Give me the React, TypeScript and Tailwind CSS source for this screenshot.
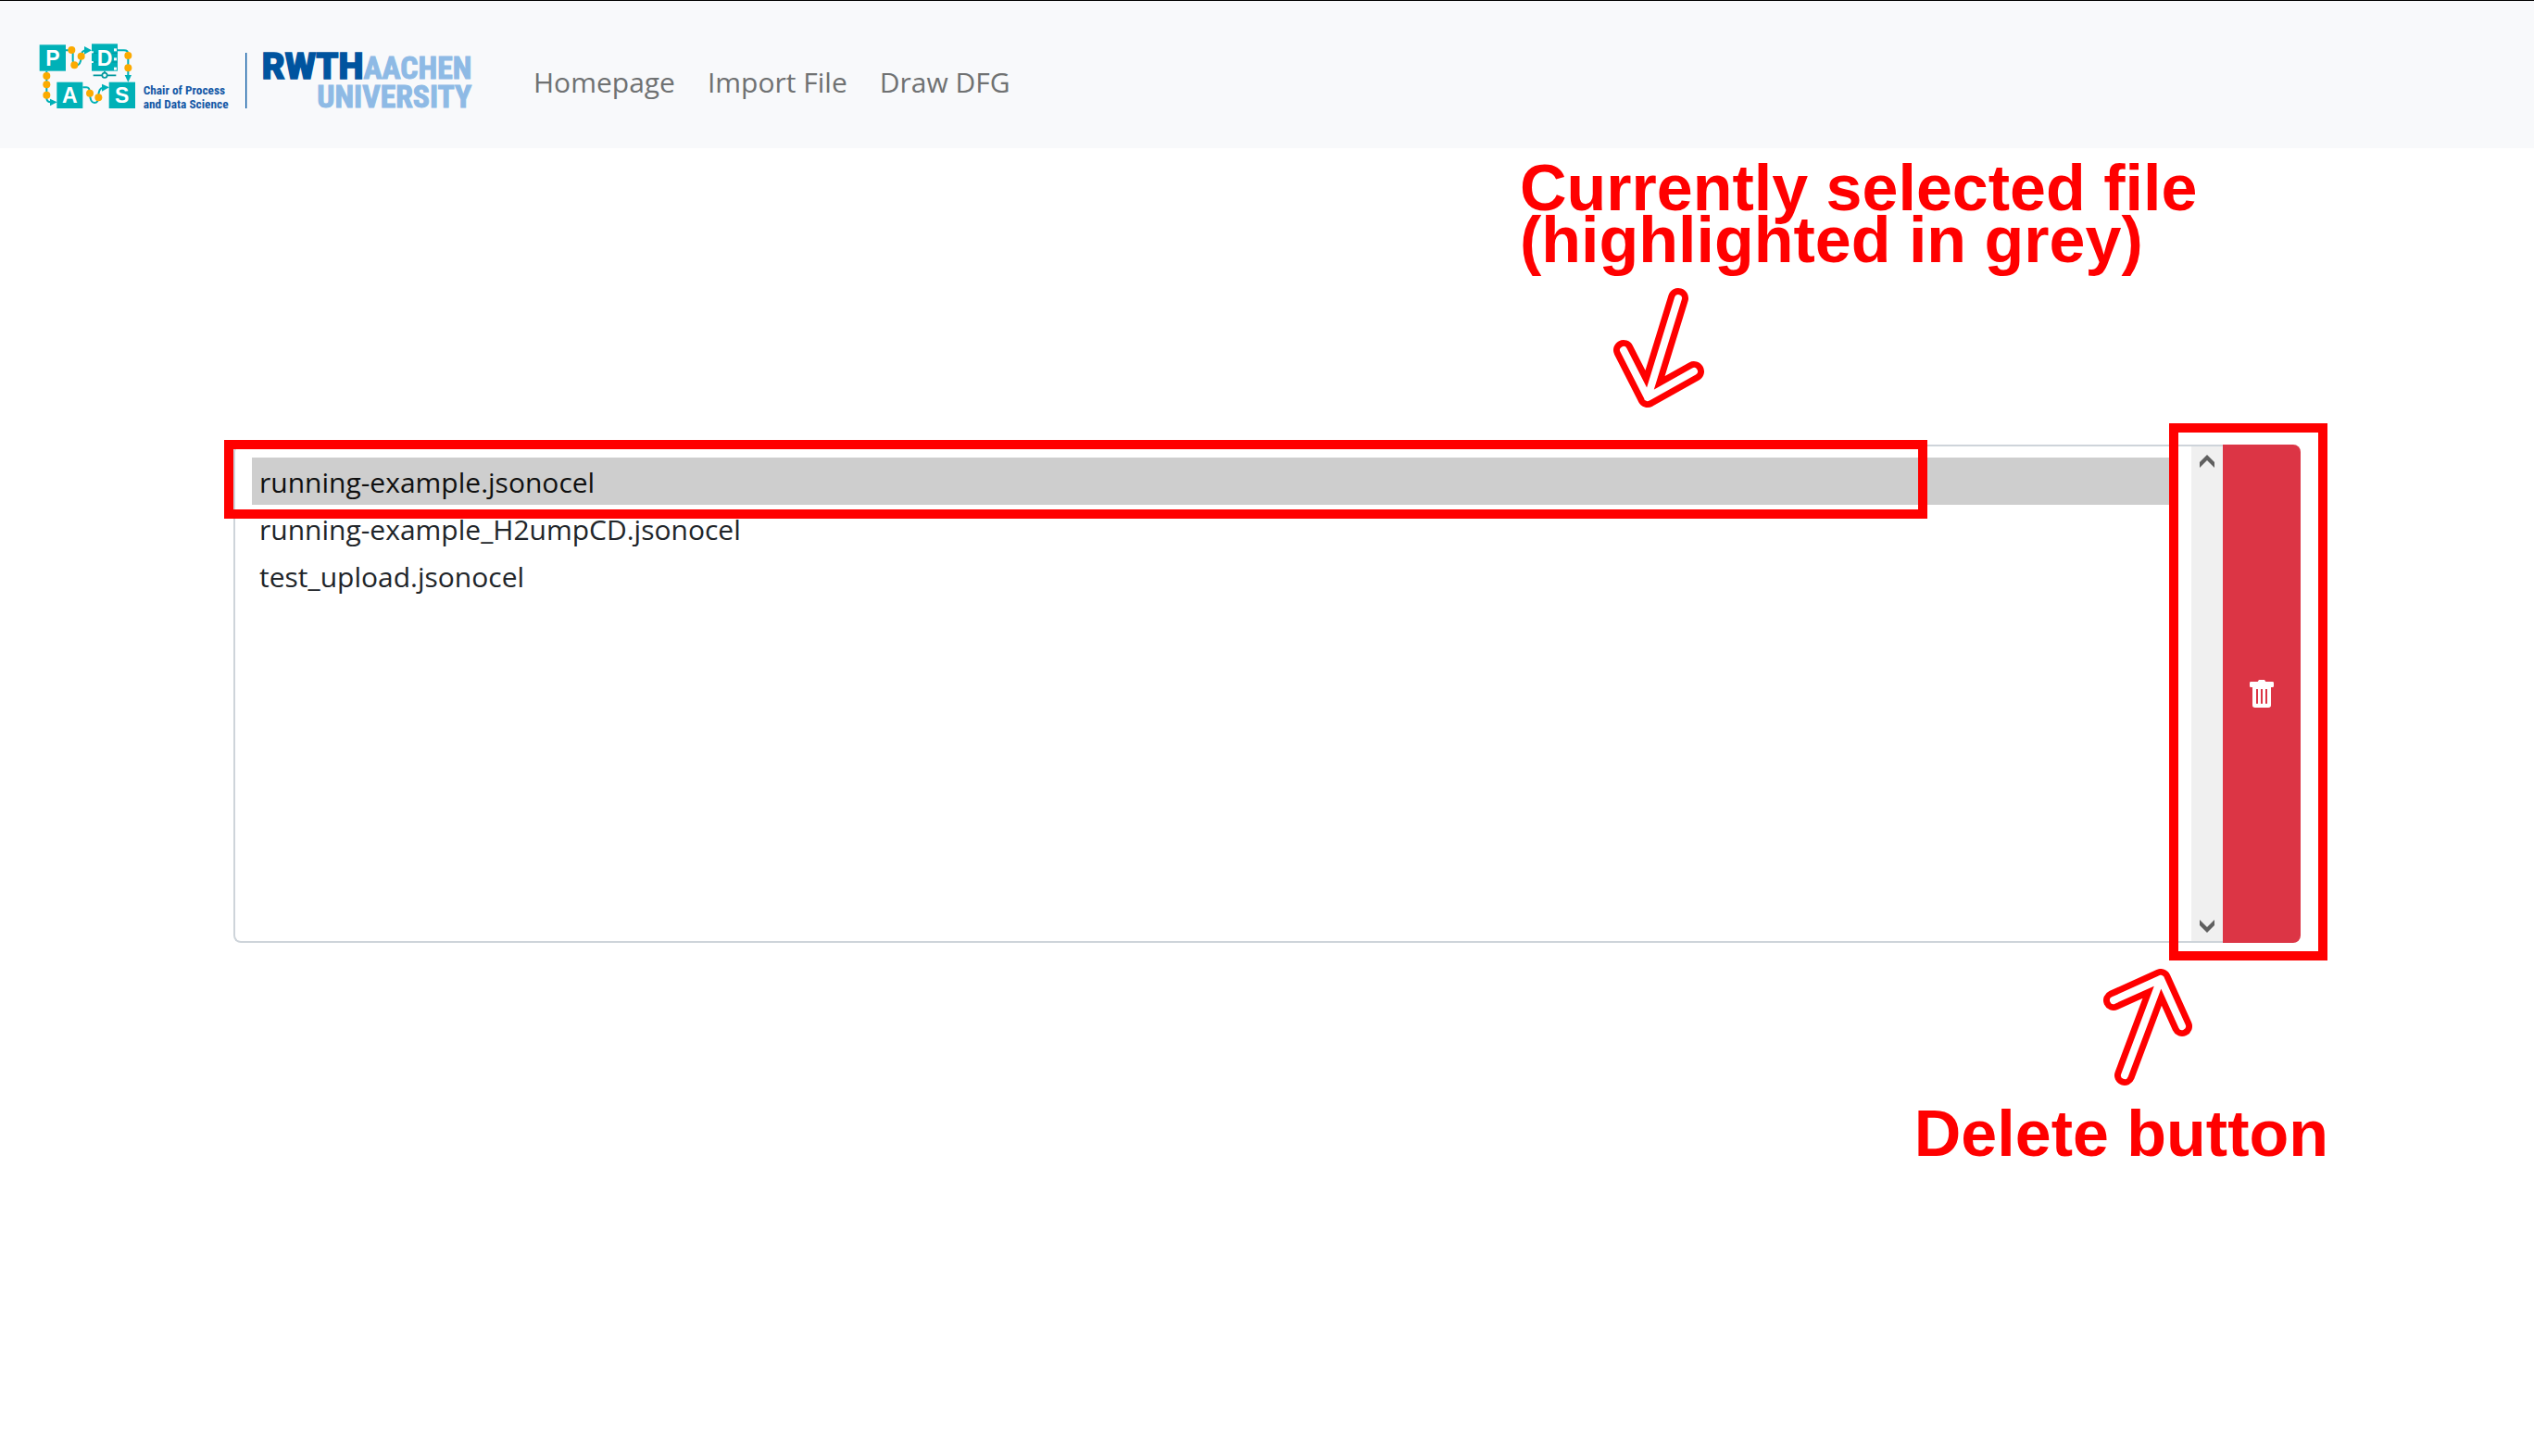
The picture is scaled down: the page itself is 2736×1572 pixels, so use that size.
import { useState } from "react";

const files = [
  "running-example.jsonocel",
  "running-example_H2umpCD.jsonocel",
  "test_upload.jsonocel",
];

const links = ["Homepage", "Import File", "Draw DFG"];

function Logo() {
  return (
    <svg
      viewBox="30 30 1410 255"
      className="h-[85px] w-[470px] shrink-0"
      role="img"
      aria-label="Chair of Process and Data Science, RWTH Aachen University"
    >
      <g fill="none" stroke="#00b1b7" strokeWidth="6">
        <path d="M123 73H142Q146 73 146 85V105Q146 122 156 122Q172 122 173 92Q174 73 190 73" />
        <path d="M291 73H312Q325 73 325 86V160" />
        <path d="M61 140V228Q61 241 76 241" />
        <path d="M178 193H190Q201 193 201 212Q202 243 216 243Q229 243 229 222Q229 195 244 194" />
      </g>
      <g fill="#00b1b7">
        <path d="M183 60L207 73L183 86Z" />
        <path d="M314 153H336L325 176Z" />
        <path d="M72 230L95 241L72 253Z" />
        <path d="M240 182L264 193L240 206Z" />
        <rect x="38" y="55" width="85" height="85" />
        <rect x="207" y="52" width="84" height="88" />
        <rect x="94" y="176" width="84" height="85" />
        <rect x="263" y="176" width="85" height="85" />
      </g>
      <g fill="#f8f9fb">
        <rect x="279" y="67" width="9" height="9" />
        <rect x="279" y="97" width="9" height="9" />
        <rect x="279" y="128" width="9" height="9" />
        <rect x="205" y="76" width="8" height="6" />
        <rect x="205" y="108" width="8" height="6" />
      </g>
      <path d="M212 82H226M272 82H291M212 111H226M272 111H291" stroke="#00979d" strokeWidth="3" />
      <path d="M249 140V148M212 154H241M257 154H286" stroke="#00979d" strokeWidth="5" />
      <circle cx="249" cy="154" r="8" fill="#f8f9fb" stroke="#00979d" strokeWidth="5" />
      <g fill="#fbaa00">
        <circle cx="142" cy="72" r="12" />
        <circle cx="151" cy="121" r="12" />
        <circle cx="173" cy="92" r="12" />
        <circle cx="325" cy="90" r="12" />
        <circle cx="325" cy="130" r="12" />
        <circle cx="61" cy="156" r="12" />
        <circle cx="61" cy="184" r="12" />
        <circle cx="61" cy="218" r="12" />
        <circle cx="201" cy="212" r="12" />
        <circle cx="229" cy="226" r="12" />
      </g>
      <g fill="#ffffff" fontFamily="Liberation Sans" fontWeight="700" fontSize="69" textAnchor="middle">
        <text x="81" y="122">P</text>
        <text x="249" y="122">D</text>
        <text x="136" y="244">A</text>
        <text x="305" y="244">S</text>
      </g>
      <g fill="#1458a6" fontFamily="Roboto Condensed, Roboto, sans-serif" fontWeight="700" fontSize="40">
        <text x="374" y="215">Chair of Process</text>
        <text x="374" y="260">and Data Science</text>
      </g>
      <rect x="705" y="81" width="4" height="180" fill="#00549f" />
      <text x="758" y="165" fill="#00549f" stroke="#00549f" strokeWidth="4" fontFamily="Roboto" fontWeight="900" fontSize="115">
        RWTH
      </text>
      <g
        fill="#8ebae5"
        stroke="#8ebae5"
        strokeWidth="3"
        fontFamily="Roboto Condensed, Roboto, sans-serif"
        fontWeight="700"
        fontSize="101"
        textAnchor="end"
      >
        <text x="1438" y="165">AACHEN</text>
        <text x="1438" y="259">UNIVERSITY</text>
      </g>
    </svg>
  );
}

function TrashIcon() {
  return (
    <svg viewBox="0 0 78 90" className="h-[30px] w-[26px]" aria-hidden="true">
      <path
        fill="#ffffff"
        fillRule="evenodd"
        d="M30 0H48L52 6H74Q78 6 78 10V20Q78 24 74 24H69V82Q69 90 61 90H17Q9 90 9 82V24H4Q0 24 0 20V10Q0 6 4 6H26ZM21 30V77H27V30ZM36 30V77H42V30ZM51 30V77H57V30Z"
      />
    </svg>
  );
}

function Arrow({ d, viewBox, className }: { d: string; viewBox: string; className: string }) {
  return (
    <svg viewBox={viewBox} className={className} fill="none" strokeLinecap="round" strokeLinejoin="round" aria-hidden="true">
      <path d={d} stroke="#ff0000" strokeWidth="22" />
      <path d={d} stroke="#ffffff" strokeWidth="8" />
    </svg>
  );
}

function ScrollButton({ up }: { up: boolean }) {
  return (
    <button type="button" aria-label={up ? "Scroll up" : "Scroll down"} className="flex h-8 items-center justify-center">
      <svg viewBox="0 0 16 14" className="h-[14px] w-4" fill="#606060" aria-hidden="true">
        <path d={up ? "M8 0L16 8V14L8 6L0 14V8Z" : "M8 14L16 6V0L8 8L0 0V6Z"} />
      </svg>
    </button>
  );
}

export default function App() {
  const [selected, setSelected] = useState(files[0]);

  return (
    <div className="min-h-screen overflow-hidden bg-white font-['Open_Sans',sans-serif] text-[#212529]">
      <header className="flex h-40 items-center border-t border-black bg-[#f8f9fb] px-10 pt-1">
        <a href="#home" className="shrink-0">
          <Logo />
        </a>
        <nav className="ml-[66px] flex items-center gap-[35px] pt-3 text-[30px] leading-[48px] text-[#6f7172]">
          {links.map((label) => (
            <a key={label} href="#" className="whitespace-nowrap">
              {label}
            </a>
          ))}
        </nav>
      </header>

      <main className="mx-auto max-w-[2280px] px-6 pt-80">
        <div className="relative flex h-[538px]">
          <div className="flex flex-1 rounded-l-lg border-2 border-r-0 border-[#ced4da]">
            <select
              size={4}
              aria-label="Uploaded files"
              value={selected}
              onChange={(e) => setSelected(e.target.value)}
              className="h-full min-w-0 flex-1 appearance-none overflow-hidden bg-transparent px-[18px] py-3 text-[30px] outline-none"
            >
              {files.map((file) => (
                <option key={file} value={file} className="h-[51px] px-2 pt-[6px] pb-0">
                  {file}
                </option>
              ))}
            </select>
            <div className="flex w-[34px] flex-col justify-between bg-[#f0f0f0]">
              <ScrollButton up />
              <ScrollButton up={false} />
            </div>
          </div>
          <button
            type="button"
            aria-label="Delete file"
            className="flex w-[84px] items-center justify-center rounded-r-lg bg-[#dc3545]"
          >
            <TrashIcon />
          </button>

          <div className="pointer-events-none absolute -top-[5px] right-[403px] -left-[10px] h-[85px] border-10 border-[#ff0000]" />
          <div className="pointer-events-none absolute -top-[23px] -right-[29px] -bottom-[19px] w-[171px] border-10 border-[#ff0000]" />

          <p className="absolute right-[113px] bottom-[731px] w-[730px] font-['Liberation_Sans',sans-serif] text-[70px] leading-14 font-bold whitespace-nowrap text-[#ff0000]">
            Currently selected file
            <br />
            (highlighted in grey)
          </p>
          <Arrow
            viewBox="1740 309 102 133"
            d="M1753 378L1779 429L1829 401M1779 429L1812 322"
            className="absolute right-[642px] bottom-[576px] h-[133px] w-[102px]"
          />
          <Arrow
            viewBox="2268 1044 102 131"
            d="M2282 1080L2333 1057L2356 1108M2333 1057L2294 1161"
            className="absolute top-[564px] right-[114px] h-[131px] w-[102px]"
          />
          <p className="absolute top-[704px] -right-[30px] font-['Liberation_Sans',sans-serif] text-[70px] leading-20 font-bold whitespace-nowrap text-[#ff0000]">
            Delete button
          </p>
        </div>
      </main>
    </div>
  );
}
